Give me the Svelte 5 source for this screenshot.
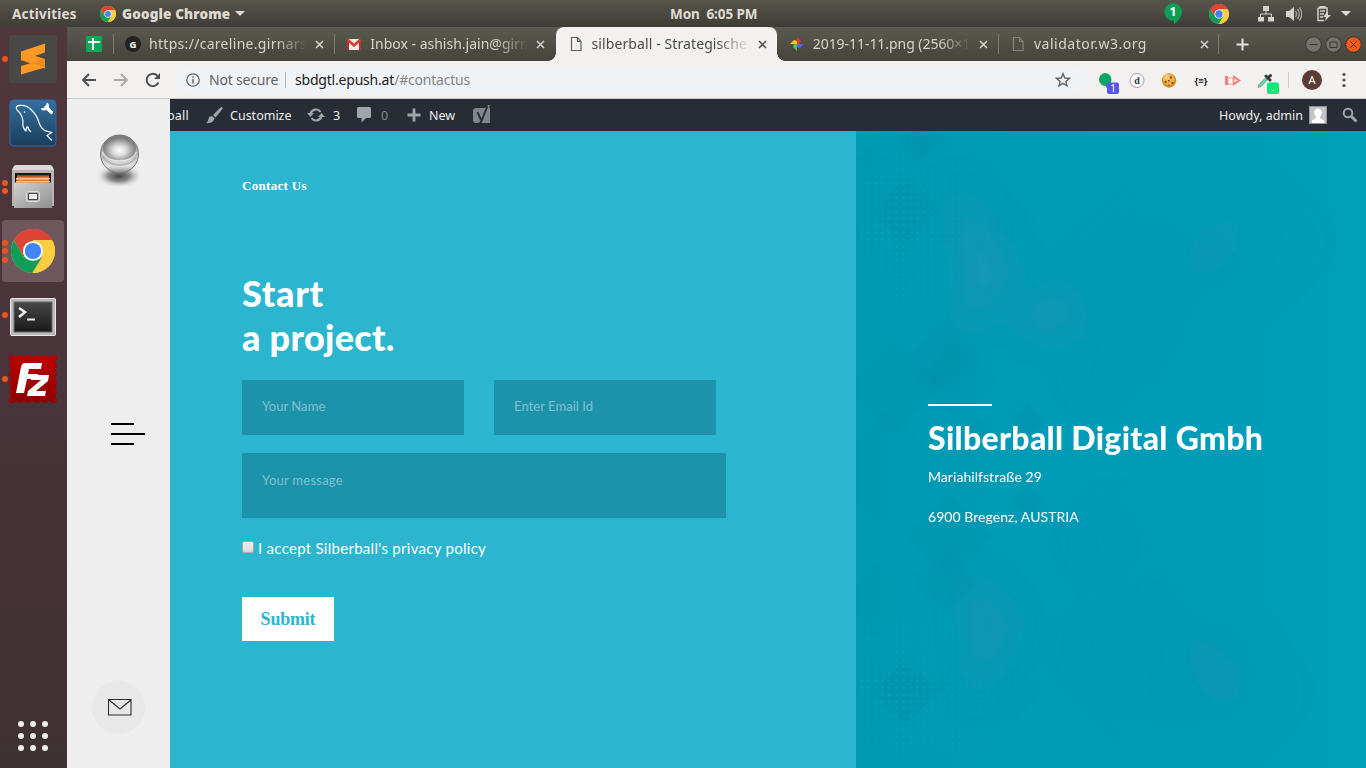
<script>
  const tabs = [
    { title: 'https://careline.girnars', icon: 'g', spacing: 0.3 },
    { title: 'Inbox - ashish.jain@girn', icon: 'mail', spacing: 0 },
    { title: 'silberball - Strategische', icon: 'doc', active: true, spacing: 0.1 },
    { title: '2019-11-11.png (2560×1', icon: 'photos', spacing: -0.05 },
    { title: 'validator.w3.org', icon: 'doc', spacing: 0.5 }
  ];
  const launchers = [
    { name: 'sublime', dots: 1 },
    { name: 'mysql', dots: 0 },
    { name: 'files', dots: 2 },
    { name: 'chrome', dots: 3, active: true },
    { name: 'terminal', dots: 1 },
    { name: 'filezilla', dots: 1 }
  ];
  const nine = [0, 1, 2, 3, 4, 5, 6, 7, 8];
  const teeth = [3, 11, 19, 28, 36, 45];
  const diamonds = [
    [66, 10, 22, 0.3], [15, 32, 18, 0.15], [50, 80, 34, 0.22], [50, 130, 22, 0.12],
    [155, 90, 22, 0.08], [88, 225, 36, 0.25], [40, 255, 48, 0.18], [172, 290, 16, 0.35], [120, 300, 14, 0.25],
    [100, 250, 40, 0.18], [30, 340, 60, 0.15], [172, 371, 16, 0.35], [110, 345, 22, 0.15], [95, 405, 42, 0.2],
    [88, 450, 32, 0.18], [50, 560, 34, 0.22], [20, 470, 36, 0.1], [160, 560, 24, 0.08]
  ];
  const washes = [
    [255, 245, 42, 0.1], [260, 410, 44, 0.1], [300, 160, 100, 0.1], [310, 520, 100, 0.1], [400, 110, 60, 0.08], [370, 560, 66, 0.1]
  ];
  const pt = ([x, y, r]) => `${x},${y - r} ${x + r},${y} ${x},${y + r} ${x - r},${y}`;
</script>

{#snippet chrome(size)}
  <svg width={size} height={size} viewBox="0 0 48 48">
    <circle cx="24" cy="24" r="24" fill="#ffcd40" />
    <path d="M24 24V12H45A24 24 0 0 0 3.200 12L13.600 30Z" fill="#db4437" />
    <path d="M3.200 12 13.600 30 24 34.500 34.400 30 23.500 48A24 24 0 0 1 3.200 12Z" fill="#0f9d58" />
    <path d="M24 13H45.300A24 24 0 0 1 23.500 48L34.400 30Z" fill="#ffcd40" />
    <circle cx="24" cy="24" r="11" fill="#f1f1f1" />
    <circle cx="24" cy="24" r="8.800" fill="#4285f4" />
  </svg>
{/snippet}

<div class="desktop">
  <header class="topbar">
    <span class="activities">Activities</span>
    <span class="app">{@render chrome(16)}<b>Google Chrome</b><i class="caret"></i></span>
    <span class="clock">Mon&nbsp; 6:05 PM</span>
    <span class="tray">
      <svg class="hang" width="18" height="22" viewBox="0 0 18 22"><path d="M9 0a9 9 0 0 1 9 9c0 5-4 9-8 12.500V18A9 9 0 1 1 9 0Z" fill="#0f9d58" /><text x="9" y="13" text-anchor="middle" font-size="12" font-weight="bold" fill="#fff">1</text></svg>
      <span class="tray-chrome">{@render chrome(20)}</span>
      <svg class="net" width="16" height="16" viewBox="0 0 16 16" fill="#d3d1cb"><path d="M5 0h6v5H5zM0 11h6v4.500H0zM10 11h6v4.500h-6z" /><path d="M8 5v3M2.500 11V8h11v3" stroke="#d3d1cb" fill="none" /></svg>
      <svg class="vol" width="16" height="16" viewBox="0 0 16 16"><path d="M0 5h3l5-4v14L3 11H0z" fill="#d3d1cb" /><path d="M9.500 5q2 3 0 6M11.500 3q3.500 5 0 10M13.500 1.500q4.500 6.500 0 13" fill="none" stroke="#aaa8a2" stroke-width="1.300" /></svg>
      <svg class="bat" width="16" height="16" viewBox="0 0 16 16"><path d="M4 2V.8h5V2h2v5M2 2h9M2 2v12.500h6" fill="none" stroke="#d3d1cb" stroke-width="1.500" /><path d="M4 5h5M4 8h4M4 11h3" stroke="#d3d1cb" stroke-width="1.500" /><path d="M12 5 7 11h3l-1 4 6-6h-3z" fill="#d3d1cb" /></svg>
      <i class="caret"></i>
    </span>
  </header>

  <div class="body">
    <nav class="dock">
      {#each launchers as l}
        <div class="launcher" class:active={l.active}>
          <span class="dots">{#each nine.slice(0, l.dots) as d}<i></i>{/each}</span>
          {#if l.name === 'sublime'}
            <svg width="48" height="48" viewBox="0 0 48 48"><rect width="48" height="48" rx="3" fill="#484848" /><path d="M12 16.500 36 8.500v9L12 25.500z" fill="#ff9a22" /><path d="M12 16.500 36 24v9.500L12 25z" fill="#ff9820" /><path d="M36 24v8.500L12 39.500V31z" fill="#ff9a22" /><path d="M22 28 36 24v8z" fill="#e28314" opacity=".6" /></svg>
          {:else if l.name === 'mysql'}
            <svg width="48" height="48" viewBox="0 0 48 48"><defs><linearGradient id="sea" x2="0" y2="1"><stop stop-color="#356f9f" /><stop offset="1" stop-color="#193e5c" /></linearGradient></defs><rect x="1" y="1" width="46" height="46" rx="4" fill="url(#sea)" stroke="#2d6ca2" /><path d="M22 33q-3-2-3-5-2-1-2 4-4-3-3-10Q13 15 8 11 6 7 10 6.500q8-1 13 5 5 5 7 12 2 6 6 8l7 2-5 3 5 5" fill="none" stroke="#eef4f8" stroke-width="1.300" stroke-linejoin="round" /><circle cx="15.500" cy="13" r=".8" fill="#fff" /><path d="m37 8 5.500 5.500" stroke="#fff" stroke-width="3.200" stroke-linecap="round" /><path d="M37.500 3.500v3l-2.500 2.500h-3q0 2.500 3 2.500 5 0 5-4.500 0-3-2.500-3.500Z" fill="#fff" /></svg>
          {:else if l.name === 'files'}
            <svg class="files" width="48" height="48" viewBox="0 0 48 48"><defs><linearGradient id="steel" x2="1" y2="1"><stop stop-color="#d2d2d2" /><stop offset="1" stop-color="#8f8f8f" /></linearGradient></defs><path d="m5 2 2-1h34l2 1 2 4v36H3V6z" fill="#b5b5b5" /><path d="m5 2 2-1h34l2 1 2 4H3z" fill="#dadada" /><path d="M6 9h36v10H6z" fill="#1e1512" /><path d="M8 12h32v7H7z" fill="#e87a2c" /><path d="M7 14h34v1.500H7zM7 17h34v1H7z" fill="#ffc287" /><path d="M8 11h32v1.500H8z" fill="#a73610" /><path d="M5 18.500h38V44H5z" fill="url(#steel)" /><rect x="17.500" y="27.500" width="13" height="10" rx="2" fill="#b0b0b0" stroke="#dedede" /><path d="M19.500 29.500h9v6h-9z" fill="#eee" stroke="#444" /></svg>
          {:else if l.name === 'chrome'}
            {@render chrome(44)}
          {:else if l.name === 'terminal'}
            <svg class="terminal" width="48" height="48" viewBox="0 0 48 48"><defs><linearGradient id="tube" x2="0" y2="1"><stop stop-color="#484848" /><stop offset="1" stop-color="#191919" /></linearGradient></defs><rect x="1.500" y="5.500" width="45" height="37" rx="1" fill="#bbb" stroke="#e7e7e7" /><rect x="5" y="9" width="38" height="30" fill="url(#tube)" stroke="#686868" /><path d="m10 15 6 4-6 5" fill="none" stroke="#eee" stroke-width="2.500" /><path d="M18 26.500h8" stroke="#eee" stroke-width="2" /></svg>
          {:else}
            <svg width="48" height="48" viewBox="0 0 48 48"><defs><linearGradient id="stamp" x2="0" y2="1"><stop stop-color="#bd0000" /><stop offset="1" stop-color="#8c0000" /></linearGradient></defs><rect x="1.500" y="1.500" width="45" height="45" fill="url(#stamp)" />{#each teeth as t}<circle cx={t} cy="2" r="2.200" fill="#bb0000" /><circle cx={t} cy="46" r="2.200" fill="#8e0000" /><circle cx="2" cy={t} r="2.200" fill="#a60000" /><circle cx="46" cy={t} r="2.200" fill="#a60000" />{/each}<path d="M16 8h17l-1 6H20l-1 5h10l-1 5H18l-3 14H7l5-26q1-4 4-4Z" fill="#fff" /><path d="M23 20h17l-1 6-12 10h10l-1 5H18l1-5 13-11H22z" fill="#fff" /></svg>
          {/if}
        </div>
      {/each}
      <div class="grid">{#each nine as n}<i></i>{/each}</div>
    </nav>

    <main class="browser">
      <div class="tabs">
        <div class="pinned"><svg width="16" height="16" viewBox="0 0 16 16"><rect width="16" height="16" rx="1.500" fill="#0aa858" /><path d="M2 6h12M7 2v12" stroke="#fff" stroke-width="2" /></svg></div>
        {#each tabs as t, i}
          <div class="tab" class:active={t.active} class:line={i !== 2 && i !== 3}>
            <span class="ico">
              {#if t.icon === 'g'}
                <svg width="16" height="16" viewBox="0 0 16 16"><circle cx="8" cy="8" r="8" fill="#232323" /><text x="8" y="11.500" text-anchor="middle" font-size="9.500" font-weight="bold" fill="#fff">G</text></svg>
              {:else if t.icon === 'mail'}
                <svg width="16" height="16" viewBox="0 0 16 16"><path d="M1 3h14v11H1z" fill="#f1eeee" /><path d="M1 3h2v11H1zM13 3h2v11h-2z" fill="#c92b24" /><path d="m1.500 3.500 6.500 6 6.500-6" fill="none" stroke="#dc3b2d" stroke-width="2.400" /></svg>
              {:else if t.icon === 'doc'}
                <svg width="16" height="16" viewBox="0 0 16 16"><path d="M3.500 1.500h6l3.500 4v9H3.500zM9.500 1.500v4H13" fill="none" stroke={t.active ? '#5f6062' : '#85847c'} stroke-width="1.200" /></svg>
              {:else}
                <svg width="16" height="16" viewBox="0 0 16 16"><path d="M8 8V1l4 4-1 3z" fill="#e0392c" /><path d="M8 8h7l-4 4-3-1z" fill="#5264f0" /><path d="M8 8v7l-4-4 1-3z" fill="#54c34d" /><path d="M8 8H1l4-4 3 1z" fill="#f8c51c" /></svg>
              {/if}
            </span>
            <span class="title" style:letter-spacing="{t.spacing}px">{t.title}</span>
            <svg class="x" width="9" height="9" viewBox="0 0 9 9"><path d="m1 1 7 7M8 1 1 8" stroke="currentColor" stroke-width="1.500" /></svg>
          </div>
        {/each}
        <svg class="plus" width="13" height="13" viewBox="0 0 13 13"><path d="M6.500 .5v12M.5 6.500h12" stroke="#e6e4df" stroke-width="2" /></svg>
        <div class="win">
          <svg width="17" height="17" viewBox="0 0 17 17"><circle cx="8.500" cy="8.500" r="7.800" fill="#75746c" stroke="#34332e" /><path d="M4.500 8.500h8" stroke="#36352f" /></svg>
          <svg width="17" height="17" viewBox="0 0 17 17"><circle cx="8.500" cy="8.500" r="7.800" fill="#75746c" stroke="#34332e" /><path d="M5 6h7v5.500H5z" fill="none" stroke="#36352f" /></svg>
          <svg width="17" height="17" viewBox="0 0 17 17"><circle cx="8.500" cy="8.500" r="7.800" fill="#ee5a1b" stroke="#3c3027" /><path d="m5.500 5.500 6 6m0-6-6 6" stroke="#57230f" /></svg>
        </div>
      </div>

      <div class="toolbar">
        <svg class="nav" width="16" height="16" viewBox="0 0 16 16"><path d="M15 8H2M8 2 2 8l6 6" fill="none" stroke="#4d4e51" stroke-width="1.900" /></svg>
        <svg class="nav" width="16" height="16" viewBox="0 0 16 16"><path d="M1 8h13M8 2l6 6-6 6" fill="none" stroke="#a9a8a7" stroke-width="1.900" /></svg>
        <svg class="nav" width="16" height="16" viewBox="0 0 16 16"><path d="M13.500 10.500A6.200 6.200 0 1 1 12.500 3.800" fill="none" stroke="#4d4e51" stroke-width="1.900" /><path d="M15 1v6H9z" fill="#4d4e51" /></svg>
        <div class="omni">
          <svg width="14" height="14" viewBox="0 0 14 14"><circle cx="7" cy="7" r="6.200" fill="none" stroke="#5f6368" stroke-width="1.300" /><path d="M7 6v4.500M7 3.300v1.500" stroke="#5f6368" stroke-width="1.500" /></svg>
          <span class="insecure">Not secure</span><i></i><span class="url">sbdgtl.epush.at<em>/#contactus</em></span>
          <svg class="star" width="16" height="16" viewBox="0 0 16 16"><path d="m8 1.800 1.800 4.200 4.600.4-3.500 3 1.100 4.400-4-2.400-4 2.400 1.100-4.400-3.500-3L6.200 6z" fill="none" stroke="#5f6368" stroke-width="1.400" /></svg>
        </div>
        <div class="exts">
          <svg width="22" height="22" viewBox="0 0 22 22"><path d="M8 1a6.500 6.500 0 0 1 6.500 6.500C14.500 11 12 14 9 16v-2A6.500 6.500 0 1 1 8 1Z" fill="#0ca566" /><rect x="10" y="10.500" width="12" height="11.500" rx="2" fill="#5a54f5" /><text x="16" y="20" text-anchor="middle" font-size="10" fill="#fff">1</text></svg>
          <svg width="22" height="22" viewBox="0 0 22 22"><circle cx="8" cy="8.500" r="7" fill="#fff" stroke="#ad98c2" /><text x="8" y="12" text-anchor="middle" font-family="Liberation Serif, serif" font-size="10" font-weight="bold" fill="#333">d</text></svg>
          <svg width="22" height="22" viewBox="0 0 22 22"><circle cx="8" cy="8.500" r="7.200" fill="#d58d25" /><circle cx="7.500" cy="7.500" r="5.800" fill="#eeb04a" /><circle cx="6" cy="5" r="2.500" fill="#f8cb78" /><path d="M3.500 9h2v2h-2zM9 4.500h2v2H9zM10.500 10h2v2h-2zM7 12.500h2v1H7zM7 8h1.500v1.500H7z" fill="#8a4a12" /></svg>
          <svg width="22" height="22" viewBox="0 0 22 22"><text x="8" y="12" text-anchor="middle" font-size="9.500" font-weight="bold" fill="#222">{'{≡}'}</text></svg>
          <svg width="22" height="22" viewBox="0 0 22 22"><path d="M0 4h3v3h5V3l8 5.500L8 14v-4H3v3H0z" fill="#ff797d" /><path d="M3 6h5v6H3z" fill="#fff" stroke="#ff9a9d" /><path d="m9 6.500 4 2-4 2z" fill="#ffe0e0" /></svg>
          <svg width="22" height="22" viewBox="0 0 22 22"><path d="m1 15.500 1-3 7-7 2 2-7 7z" fill="#57d5a2" stroke="#8b8b8b" stroke-width=".8" /><path d="m9 4 4 4M11.500 5.500l2-2" stroke="#363a3c" stroke-width="3" stroke-linecap="round" /><rect x="10" y="10.500" width="12" height="11.500" rx="2" fill="#00ec76" /><path d="M15.500 18h1.200v1h-1.200z" fill="#fff" /></svg>
        </div>
        <i class="sep"></i>
        <span class="avatar">A</span>
        <svg class="kebab" width="4" height="16" viewBox="0 0 4 16" fill="#4d4e51"><circle cx="2" cy="2.500" r="1.600" /><circle cx="2" cy="8" r="1.600" /><circle cx="2" cy="13.500" r="1.600" /></svg>
      </div>

      <div class="page">
        <aside class="side">
          <svg class="ball" width="52" height="60" viewBox="0 0 52 60">
            <defs>
              <radialGradient id="shade"><stop stop-color="#444" /><stop offset=".45" stop-color="#777" stop-opacity=".85" /><stop offset="1" stop-color="#eee" stop-opacity="0" /></radialGradient>
              <radialGradient id="glow" cy=".62"><stop stop-color="#fff" /><stop offset=".4" stop-color="#dcdcdc" /><stop offset="1" stop-color="#7d7d7d" /></radialGradient>
              <linearGradient id="bowl" x2="0" y2="1"><stop stop-color="#7c7c7c" /><stop offset=".45" stop-color="#b4b4b4" /><stop offset=".82" stop-color="#e2e2e2" /><stop offset="1" stop-color="#858585" /></linearGradient>
            </defs>
            <ellipse cx="26" cy="46" rx="24" ry="12" fill="url(#shade)" />
            <circle cx="26.500" cy="24" r="19" fill="url(#bowl)" stroke="#7a7a7a" />
            <path d="M10 19a16.500 14 0 0 1 33 0q-2 11-16.500 11T10 19Z" fill="url(#glow)" />
            <path d="M9.500 22q4 9 17 9t17-9" fill="none" stroke="#ececec" stroke-width="1" />
            <path d="M10 27q5 8 16.500 8T43 27" fill="none" stroke="#a9a9a9" stroke-width="2" opacity=".7" />
          </svg>
          <div class="burger"><i></i><i></i><i></i></div>
          <div class="mail"><svg width="24" height="17" viewBox="0 0 24 17"><path d="M.5 .5h22.500v15.500H.5zM1 1l11 9L23 1" fill="none" stroke="#2b2b2b" stroke-width="1.100" /></svg></div>
        </aside>

        <div class="site">
          <div class="wpbar">
            <span class="ball-text">ball</span>
            <svg class="brush" width="17" height="17" viewBox="0 0 17 17" fill="#a0a5aa"><path d="M16.500.5q-1-.8-2 0L7 8l2.500 2.500L16 2.500q1-1 .5-2ZM6 9q-3 0-3.500 3T0 16q7 1 8.500-4.500z" /></svg>
            <span class="customize">Customize</span>
            <svg class="sync" width="18" height="16" viewBox="0 0 18 16"><path d="M3.500 7a5.500 5.500 0 0 1 10-2M14.500 9a5.500 5.500 0 0 1-10 2" fill="none" stroke="#a0a5aa" stroke-width="2.200" /><path d="M0 6h7L3.500 10zM11 10h7l-3.500-4z" fill="#a0a5aa" /></svg>
            <span class="three">3</span>
            <svg class="bubble" width="14" height="16" viewBox="0 0 14 16"><path d="M1.500 0h11Q14 0 14 1.500v8Q14 11 12.500 11H9l-4.500 4.500V11h-3Q0 11 0 9.500v-8Q0 0 1.500 0Z" fill="#a0a5aa" /></svg>
            <span class="zero">0</span>
            <svg class="add" width="14" height="14" viewBox="0 0 14 14"><path d="M7 .5v13M.5 7h13" stroke="#a0a5aa" stroke-width="2.800" /></svg>
            <span class="new">New</span>
            <svg class="yoast" width="18" height="20" viewBox="0 0 18 20"><path d="M3 3h9l3-3h2l-1 3h1v15H3q-3 0-3-3V6q0-3 3-3Z" fill="#82878c" /><path d="m4.500 7 3.500 8M14.500 1 8.500 16q-1 3-4 3" fill="none" stroke="#282c34" stroke-width="1.900" /></svg>
            <span class="howdy">Howdy, admin</span>
            <svg class="pic" width="18" height="18" viewBox="0 0 18 18"><rect x=".5" y=".5" width="17" height="17" fill="#c2c4c6" stroke="#91959a" /><path d="M9 2.500a4 4 0 0 1 3 6.500l-1 2v1l4 2.500V17H3v-2.500L7 12v-1L6 9a4 4 0 0 1 3-6.500Z" fill="#fff" /></svg>
            <svg class="search" width="16" height="16" viewBox="0 0 16 16"><circle cx="6" cy="6" r="4.300" fill="none" stroke="#a0a5aa" stroke-width="2" /><path d="m9.500 9.500 5 5" stroke="#a0a5aa" stroke-width="3" /></svg>
          </div>
          <div class="split">
            <section class="form">
              <h5>Contact Us</h5>
              <h1><span class="start">Start</span><br />a project.</h1>
              <div class="row">
                <div class="field">Your Name</div>
                <div class="field">Enter Email Id</div>
              </div>
              <div class="field message">Your message</div>
              <div class="accept"><i></i><span>I accept Silberball's privacy policy</span></div>
              <button>Submit</button>
            </section>
            <section class="info">
              <svg class="art" width="510" height="637" viewBox="0 0 510 637">
                <defs>
                  <filter id="soft"><feGaussianBlur stdDeviation="1.500" /></filter>
                  <filter id="wash" x="-30%" y="-30%" width="160%" height="160%"><feGaussianBlur stdDeviation="16" /></filter>
                </defs>
                <g filter="url(#wash)">
                  {#each washes as d}<polygon points={pt(d)} fill="#008aa6" opacity={d[3]} />{/each}
                  <path d="m100 50 60 90-50 70zM150 190l60-40 10 60zM335 155q10-60 40-70v30zM110 440l50 50-40 80zM335 495q10 60 40 85v-40z" fill="#2b93b4" opacity=".45" />
                </g>
                <g filter="url(#soft)">
                  {#each diamonds as d}<polygon points={pt(d)} fill="#008aa6" opacity={d[3]} />{/each}
                </g>
              </svg>
              <div class="halftone"></div>
              <div class="copy">
                <i></i>
                <h2>Silberball Digital Gmbh</h2>
                <p>Mariahilfstraße 29</p>
                <p class="city">6900 Bregenz, AUSTRIA</p>
              </div>
            </section>
          </div>
        </div>
      </div>
    </main>
  </div>
</div>

<style>
  :global(body) { margin: 0; overflow: hidden; }
  * { box-sizing: border-box; }
  svg { display: block; flex: none; }
  .desktop { width: 1366px; height: 768px; display: flex; flex-direction: column; overflow: hidden; font: 14px/20px "Noto Sans", "Open Sans", sans-serif; white-space: nowrap; }
  .topbar { height: 27px; flex: none; display: grid; grid-template-columns: 100px 570px 1fr auto; align-items: center; background: linear-gradient(#57544b, #3f3d37); color: #dfdbd2; font-weight: 700; font-size: 13.500px; }
  .activities { padding-left: 12px; letter-spacing: .2px; }
  .app { display: flex; align-items: center; }
  .app b { margin-left: 6px; letter-spacing: .15px; }
  .clock { letter-spacing: -.1px; }
  .caret { width: 0; height: 0; border: 5px solid transparent; border-top-color: #dfdbd2; border-bottom: 0; }
  .app .caret { margin-left: 5px; }
  .tray { display: flex; align-items: center; padding-right: 15px; }
  .tray-chrome { margin-left: 27px; }
  .net { margin-left: 29px; }
  .vol { margin-left: 12px; }
  .bat { margin-left: 14px; }
  .tray .caret { margin-left: 9px; }
  .body { flex: 1; display: flex; min-height: 0; }
  .dock { width: 67px; flex: none; display: flex; flex-direction: column; background: linear-gradient(#50373b, #48343a 50%, #413133 94%, #3c3232); }
  .launcher { height: 64px; width: 66px; display: flex; align-items: center; justify-content: center; position: relative; }
  .launcher.active { height: 62px; width: 62px; margin: 1px 2px; background: #6e585d; border-radius: 4px; }
  .files { margin-top: 2px; }
  .terminal { margin-top: 3px; }
  .dots { position: absolute; left: 2px; top: 0; height: 100%; display: flex; flex-direction: column; justify-content: center; gap: 2.500px; }
  .active .dots { left: 0; }
  .dots i { width: 6px; height: 6px; border-radius: 50%; background: #e95420; }
  .grid { margin: auto 0 17px 18px; display: grid; grid-template-columns: repeat(3, 6px); gap: 6px; }
  .grid i { width: 6px; height: 6px; border-radius: 50%; background: #eee; }
  .browser { flex: 1; min-width: 0; display: flex; flex-direction: column; }
  .tabs { height: 34px; flex: none; display: flex; align-items: center; background: linear-gradient(#5b5a50, #45443c); color: #d6d4cd; font-size: 14px; }
  .pinned { width: 46px; padding-left: 19px; }
  .tab { width: 221.250px; height: 34px; flex: none; display: flex; align-items: center; position: relative; }
  .tab.line::before { content: ""; position: absolute; left: 0; top: 7px; height: 20px; width: 1px; background: #7b7a71; }
  .tab:nth-child(6)::after { content: ""; position: absolute; right: 0; top: 7px; height: 20px; width: 1px; background: #7b7a71; }
  .tab.active { background: #f2f1f0; color: #4a4a4a; border-radius: 8px 8px 0 0; }
  .tab.active::before, .tab.active::after { content: ""; position: absolute; bottom: 0; width: 8px; height: 8px; }
  .tab.active::before { left: -8px; background: radial-gradient(circle at 0 0, transparent 7.500px, #f2f1f0 8px); }
  .tab.active::after { right: -8px; background: radial-gradient(circle at 100% 0, transparent 7.500px, #f2f1f0 8px); }
  .ico { margin-left: 12px; }
  .title { width: 158px; margin-left: 8px; overflow: hidden; -webkit-mask: linear-gradient(90deg, #000 80%, transparent 100%); mask: linear-gradient(90deg, #000 80%, transparent 100%); }
  .x { margin-left: 8px; }
  .plus { margin-left: 17px; }
  .win { margin-left: auto; display: flex; gap: 3px; padding-right: 4px; }
  .toolbar { height: 38px; flex: none; display: flex; align-items: center; background: #f2f1f0; border-bottom: 1px solid #c9c8c7; }
  .nav { margin-left: 14px; margin-right: 2px; }
  .omni { height: 28px; width: 910px; margin-left: 14px; padding-left: 9px; border-radius: 14px; background: #f0f2f5; display: flex; align-items: center; font-size: 14px; }
  .insecure { margin-left: 9px; width: 70px; color: #5f6368; letter-spacing: -.2px; }
  .omni i { width: 1px; height: 16px; background: #b0b2b5; margin: 0 9px 0 6px; }
  .url { color: #202124; letter-spacing: -.2px; }
  .url em { font-style: normal; color: #80868b; }
  .star { margin-left: auto; margin-right: 16px; }
  .exts { display: flex; gap: 10px; margin-left: 10px; padding-top: 6px; }
  .sep { width: 1px; height: 16px; margin-left: 9px; background: #ccc; }
  .avatar { width: 20px; height: 20px; margin-left: 13px; border-radius: 50%; background: #5b3b32; color: #fff; font-size: 11px; text-align: center; }
  .kebab { margin-left: 20px; }
  .page { flex: 1; display: flex; min-height: 0; }
  .side { width: 103px; flex: none; background: #eee; display: flex; flex-direction: column; padding: 31px 0 34px; }
  .ball { margin-left: 26px; }
  .burger { margin: 233px 0 0 44px; display: flex; flex-direction: column; gap: 8px; }
  .burger i { width: 23px; height: 2px; background: #000; }
  .burger i:nth-child(2) { width: 34px; }
  .mail { margin: auto 0 0 25px; width: 53px; height: 53px; border-radius: 50%; background: #e8e8e8; display: grid; place-items: center; padding-left: 2px; }
  .site { flex: 1; min-width: 0; display: flex; flex-direction: column; }
  .wpbar { height: 32px; flex: none; background: #282c34; color: #eee; display: flex; align-items: center; font-size: 12.500px; overflow: hidden; }
  .wpbar span { padding-top: 2px; }
  .ball-text { width: 36px; margin-left: -3px; letter-spacing: .15px; }
  .brush { margin-left: 3px; }
  .customize { width: 77px; margin-left: 7px; }
  .three { margin-left: 8px; width: 24px; }
  .zero { margin-left: 10px; width: 26px; color: #82878c; }
  .new { margin-left: 8px; width: 44px; }
  .howdy { margin-left: auto; }
  .pic { margin-left: 6px; }
  .search { margin: 0 8px 0 15px; }
  .split { flex: 1; display: flex; min-height: 0; }
  .form { width: 686px; padding: 46px 0 0 72px; background: #2cb5cf; color: #fff; font-family: Lato, sans-serif; }
  h1, h2, h5, p { margin: 0; }
  h5 { font: bold 13px/17px "Liberation Serif", serif; height: 17px; letter-spacing: .3px; }
  h1 { font-size: 36px; line-height: 44px; font-weight: 900; margin-top: 77px; letter-spacing: .3px; }
  .start { letter-spacing: .7px; }
  .row { display: flex; gap: 30px; margin-top: 21px; }
  .field { width: 222px; height: 55px; padding: 16px 20px; background: #1c93ab; color: #83bfce; font-size: 13px; letter-spacing: .05px; }
  .message { width: 484px; height: 65px; margin-top: 18px; padding-top: 17px; letter-spacing: .25px; }
  .accept { display: flex; margin-top: 20px; font-size: 15px; align-items: center; letter-spacing: .28px; }
  .accept i { width: 12px; height: 12px; margin: -2px 4px 0 0; border: 1px solid #a9a9a9; border-radius: 2px; background: linear-gradient(#eee, #d9d9d9); }
  button { display: block; width: 92px; height: 44px; margin-top: 39px; padding: 0; border: 0; background: #fff; color: #2cb5cf; font: bold 18px/44px "Liberation Serif", serif; letter-spacing: -.2px; }
  .info { flex: 1; position: relative; background: linear-gradient(90deg, #009ab3, #009bb7 45%, #009fba); color: #fff; font-family: Lato, sans-serif; overflow: hidden; }
  .art { position: absolute; inset: 0; }
  .halftone { position: absolute; inset: 0; background: radial-gradient(circle, #12a9c0 .8px, transparent 1.500px) 2px 0 / 7px 7px; opacity: .5; -webkit-mask: radial-gradient(ellipse 170px 130px at 40px 90px, #000, transparent), radial-gradient(ellipse 170px 120px at 40px 560px, #000, transparent); mask: radial-gradient(ellipse 170px 130px at 40px 90px, #000, transparent), radial-gradient(ellipse 170px 120px at 40px 560px, #000, transparent); }
  .copy { position: relative; padding: 273px 0 0 72px; }
  .copy i { display: block; width: 64px; height: 2px; background: #fff; }
  h2 { font-size: 32px; line-height: 40px; font-weight: 900; margin-top: 12px; letter-spacing: .3px; }
  p { font-size: 14px; line-height: 20px; margin-top: 9px; letter-spacing: .05px; }
  .city { margin-top: 20px; }
</style>
